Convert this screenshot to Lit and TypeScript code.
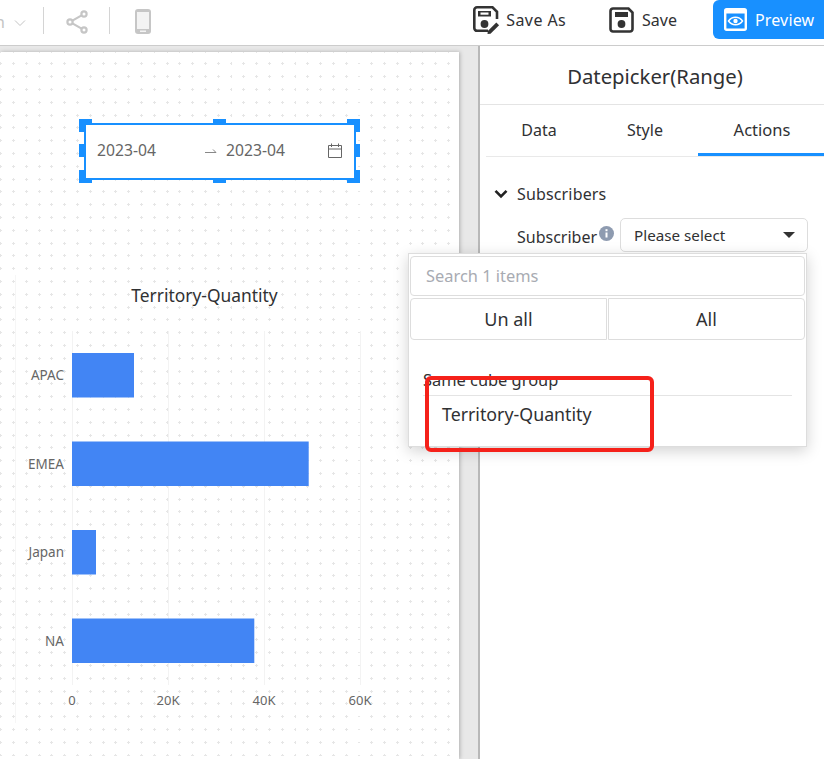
import { LitElement, css, html, svg, unsafeCSS } from 'lit';
import { customElement } from 'lit/decorators.js';

const BARS = [
  { name: 'APAC', end: 134, y: 83 },
  { name: 'EMEA', end: 308.7, y: 171.5 },
  { name: 'Japan', end: 96, y: 260 },
  { name: 'NA', end: 254.3, y: 348.5 },
];
const TICKS = [
  { label: '0', x: 72 },
  { label: '20K', x: 168 },
  { label: '40K', x: 264 },
  { label: '60K', x: 360 },
];

// little plus marks of the design grid
const dots = unsafeCSS(
  "url(\"data:image/svg+xml,%3Csvg xmlns='http://www.w3.org/2000/svg' width='12.8' height='12.8'%3E%3Cpath d='M0 1.5h3M1.5 0v3' stroke='%23e6e6e6' stroke-width='1'/%3E%3C/svg%3E\")"
);

@customElement('app-root')
export class AppRoot extends LitElement {
  static styles = css`
    :host {
      display: block;
      width: 824px;
      height: 759px;
      overflow: hidden;
      position: relative;
      background: #fff;
      font-family: 'Noto Sans', 'Open Sans', sans-serif;
      font-size: 16px;
      color: #303133;
    }
    svg {
      display: block;
      flex: none;
    }

    /* toolbar */
    .toolbar {
      height: 45px;
      border-bottom: 1px solid #ccc;
      display: flex;
      align-items: flex-start;
      background: #fff;
    }
    .cut {
      width: 13px;
      overflow: hidden;
      color: #c4c4c4;
      font-size: 16px;
      line-height: 44px;
      text-indent: -5px;
    }
    .chev {
      margin: 19px 0 0 0;
    }
    .sep {
      width: 1px;
      height: 27px;
      margin-top: 7px;
      background: #d4d4d4;
    }
    .sep.first {
      margin-left: 16px;
    }
    .share {
      margin: 10px 21px 0 22px;
    }
    .phone {
      margin: 9px 0 0 25px;
    }
    .actions {
      margin-left: auto;
      display: flex;
      align-items: flex-start;
    }
    .action {
      display: flex;
      align-items: center;
      gap: 6px;
      height: 40px;
      color: #303133;
      font-size: 16px;
    }
    .action.save-as {
      margin-right: 43px;
      letter-spacing: 0.4px;
    }
    .action.save {
      margin-right: 36px;
      gap: 8px;
    }
    .preview {
      width: 111px;
      height: 39px;
      background: #1890ff;
      color: #fff;
      border-radius: 6px 0 0 6px;
      display: flex;
      align-items: center;
      padding-left: 11px;
      gap: 8px;
      box-sizing: border-box;
      letter-spacing: 0.15px;
    }

    /* body */
    .main {
      display: flex;
      height: 713px;
    }
    .stage {
      width: 478px;
      flex: none;
      background: #e8e8e8;
      padding-top: 6px;
      border-right: 2px solid #b8b8b8;
    }
    .canvas {
      position: relative;
      width: 459px;
      height: 707px;
      background-color: #fff;
      background-image: ${dots};
      background-position: -0.8px -2.3px;
      box-shadow: 1px 0 4px rgba(0, 0, 0, 0.25);
    }
    .picker {
      position: absolute;
      left: 84px;
      top: 71px;
      width: 272px;
      height: 57px;
      box-sizing: border-box;
      border: 2px solid #1890ff;
      background: #fff;
      display: flex;
      align-items: center;
      color: #666;
      font-size: 15.7px;
      padding: 0 0 4px 11px;
    }
    .picker .date {
      width: 106px;
    }
    .picker .to {
      width: 23px;
      margin-top: 1px;
    }
    .picker .cal {
      position: absolute;
      left: 242px;
      top: 18px;
    }
    .h {
      position: absolute;
      background: #1890ff;
    }
    .h.top,
    .h.bottom {
      width: 13px;
      height: 5px;
      left: 127px;
    }
    .h.top {
      top: -6px;
    }
    .h.bottom {
      bottom: -5px;
    }
    .h.left,
    .h.right {
      width: 5px;
      height: 13px;
      top: 19px;
    }
    .h.left {
      left: -7px;
    }
    .h.right {
      right: -6px;
    }
    .c {
      position: absolute;
      width: 13px;
      height: 13px;
      box-sizing: border-box;
      border: 0 solid #1890ff;
    }
    .c.tl {
      left: -7px;
      top: -6px;
      border-width: 5px 0 0 5px;
    }
    .c.tr {
      right: -6px;
      top: -6px;
      border-width: 5px 5px 0 0;
    }
    .c.bl {
      left: -7px;
      bottom: -5px;
      border-width: 0 0 5px 5px;
    }
    .c.br {
      right: -6px;
      bottom: -5px;
      border-width: 0 5px 5px 0;
    }
    .chart {
      position: absolute;
      left: 0;
      top: 218px;
    }
    .chart text {
      font-family: 'Noto Sans', 'Open Sans', sans-serif;
    }

    /* side panel */
    .panel {
      flex: 1;
      min-width: 0;
      background: #fff;
    }
    .panel-title {
      height: 58px;
      line-height: 60px;
      text-align: center;
      font-size: 20.3px;
      padding-left: 6px;
      border-bottom: 1px solid #e4e4e4;
    }
    .tabs {
      margin-left: 6px;
      height: 51px;
      display: grid;
      grid-template-columns: 106px 106px 126px;
      border-bottom: 1px solid #e9e9e9;
    }
    .tab {
      text-align: center;
      line-height: 50px;
      font-size: 16px;
      height: 51px;
      box-sizing: border-box;
    }
    .tab.active {
      border-bottom: 3px solid #1890ff;
      font-size: 16.5px;
      padding-left: 2px;
    }
    .section {
      display: flex;
      align-items: center;
      margin: 26px 0 0 14px;
      gap: 9px;
      height: 22px;
      letter-spacing: 0.15px;
    }
    .field {
      display: flex;
      align-items: center;
      margin: 13px 0 0 37px;
    }
    .field .label {
      padding-top: 3px;
    }
    .info {
      margin: -3px 6px 0 2px;
    }
    .select {
      width: 188px;
      height: 34px;
      box-sizing: border-box;
      border: 1px solid #ddd;
      border-radius: 5px;
      display: flex;
      align-items: center;
      justify-content: space-between;
      padding: 0 12px 0 13px;
      font-size: 15.2px;
    }

    /* dropdown over the panel */
    .drop {
      position: absolute;
      left: 408px;
      top: 253px;
      width: 399px;
      height: 194px;
      box-sizing: border-box;
      background: #fff;
      border: 1px solid #ddd;
      box-shadow: 0 4px 14px rgba(0, 0, 0, 0.18);
      padding: 2px 1px 0;
    }
    .search {
      height: 40px;
      box-sizing: border-box;
      border: 1px solid #ddd;
      border-radius: 4px;
      color: #a8abb2;
      line-height: 38px;
      padding-left: 15px;
      font-size: 16.4px;
    }
    .btns {
      display: grid;
      grid-template-columns: 1fr 1fr;
      gap: 1px;
      margin-top: 2px;
    }
    .btn {
      height: 42px;
      box-sizing: border-box;
      border: 1px solid #ddd;
      text-align: center;
      line-height: 40px;
      font-size: 18px;
    }
    .btn:first-child {
      border-radius: 4px 0 0 4px;
    }
    .btn:last-child {
      border-radius: 0 4px 4px 0;
    }
    .group {
      margin: 28px 13px 0 13px;
      height: 27px;
      line-height: 24px;
      font-size: 16.4px;
      border-bottom: 1px solid #e4e4e4;
    }
    .item {
      margin: 5px 0 0 32px;
      font-size: 17.8px;
      line-height: 26px;
    }
    .mark {
      position: absolute;
      left: 425px;
      top: 376px;
      width: 229px;
      height: 76px;
      box-sizing: border-box;
      border: 4px solid #f5211a;
      border-radius: 6px;
      pointer-events: none;
    }
  `;

  private renderChart() {
    return svg`
      <line x1="15.5" y1="5" x2="15.5" y2="453" stroke="#f6f6f6"/>
      ${TICKS.map(
        (t) => svg`<line x1=${t.x + 0.5} y1="61" x2=${t.x + 0.5} y2="415" stroke="#f3f3f3"/>
          <text x=${t.x} y="435" text-anchor="middle" font-size="13" fill="#666">${t.label}</text>`
      )}
      <text x="204.5" y="32" text-anchor="middle" font-size="17.400" fill="#303133">Territory-Quantity</text>
      ${BARS.map(
        (b) => svg`<rect x="72" y=${b.y} width=${b.end - 72} height="44.5" fill="#4285f4"/>
          <text x="64" y=${b.y + 27} text-anchor="end" font-size="13.500" fill="#666">${b.name}</text>`
      )}
    `;
  }

  render() {
    return html`
      <div class="toolbar">
        <div class="cut">n</div>
        <svg class="chev" width="14" height="8" viewBox="0 0 14 8"><path d="M2 1.5l5 5 5-5" fill="none" stroke="#c4c4c4" stroke-width="1"/></svg>
        <div class="sep first"></div>
        <svg class="share" width="22" height="24" viewBox="0 0 22 24">
          <g fill="none" stroke="#c6c6c6" stroke-width="2.2">
            <circle cx="4" cy="12" r="2.6"/><circle cx="18" cy="4" r="2.6"/><circle cx="18" cy="20" r="2.6"/>
            <path d="M6.4 10.6L15.6 5.4M6.4 13.4l9.2 5.2"/>
          </g>
        </svg>
        <div class="sep"></div>
        <svg class="phone" width="16" height="25" viewBox="0 0 16 25">
          <rect width="16" height="25" rx="3" fill="#c6c6c6"/>
          <rect x="2" y="3" width="12" height="17" fill="#f3f3f3"/>
          <rect x="5" y="21.5" width="6" height="1.5" fill="#f3f3f3"/>
        </svg>
        <div class="actions">
          <div class="action save-as">
            <svg width="27" height="28" viewBox="0 0 27 28">
              <path d="M15 24.800H4a2.700 2.700 0 0 1-2.700-2.700V4A2.700 2.700 0 0 1 4 1.300h15.500l4.500 4.500V13" fill="none" stroke="#333" stroke-width="2.600"/>
              <path d="M5 5h13v5.500H5z" fill="#333"/>
              <rect x="7.500" y="6.500" width="8" height="2.200" fill="#fff"/>
              <circle cx="11.500" cy="18" r="3.900" fill="#333"/>
              <path d="M17.500 27.800l-3 .2.300-3 8.500-8.500 2.800 2.800z" fill="#333"/>
            </svg>
            Save As
          </div>
          <div class="action save">
            <svg width="25" height="26" viewBox="0 0 25 26">
              <path d="M4 1.500h15.500l4 4V22a2.500 2.500 0 0 1-2.500 2.500H4A2.500 2.500 0 0 1 1.500 22V4A2.500 2.500 0 0 1 4 1.500z" fill="none" stroke="#333" stroke-width="2.600"/>
              <path d="M6 5h13v5H6z" fill="#333"/>
              <circle cx="12.500" cy="17" r="3.900" fill="#333"/>
            </svg>
            Save
          </div>
          <div class="preview">
            <svg width="23" height="23" viewBox="0 0 23 23">
              <rect x="1.200" y="1.200" width="20.600" height="20.600" rx="1.500" fill="none" stroke="#fff" stroke-width="2.400"/>
              <rect x="1" y="1" width="21" height="4.500" fill="#fff"/>
              <path d="M4.500 13c3.500-5 10.500-5 14 0-3.500 5-10.500 5-14 0z" fill="none" stroke="#fff" stroke-width="1.500"/>
              <circle cx="11.500" cy="13" r="2.200" fill="#fff"/>
            </svg>
            Preview
          </div>
        </div>
      </div>

      <div class="main">
        <div class="stage">
          <div class="canvas">
            <div class="picker">
              <span class="date">2023-04</span>
              <svg class="to" width="23" height="8" viewBox="0 0 23 8"><path d="M2 6.500h11L10 3.500" fill="none" stroke="#888" stroke-width="1"/></svg>
              <span class="date">2023-04</span>
              <svg class="cal" width="14" height="15" viewBox="0 0 14 15">
                <path d="M.5 2.500h13v12H.5zM.5 6h13M3.500 .5v3.500M10.500 .5v3.500" fill="none" stroke="#666" stroke-width="1"/>
              </svg>
              <i class="c tl"></i><i class="c tr"></i><i class="c bl"></i><i class="c br"></i>
              <i class="h top"></i><i class="h bottom"></i><i class="h left"></i><i class="h right"></i>
            </div>
            <svg class="chart" width="459" height="489" viewBox="0 0 459 489">${this.renderChart()}</svg>
          </div>
        </div>
        <div class="panel">
          <div class="panel-title">Datepicker(Range)</div>
          <div class="tabs">
            <div class="tab">Data</div>
            <div class="tab">Style</div>
            <div class="tab active">Actions</div>
          </div>
          <div class="section">
            <svg width="14" height="10" viewBox="0 0 14 10"><path d="M1.500 1.800L7 7.500l5.500-5.700" fill="none" stroke="#222" stroke-width="2.600"/></svg>
            Subscribers
          </div>
          <div class="field">
            <span class="label">Subscriber</span>
            <svg class="info" width="15" height="15" viewBox="0 0 15 15">
              <circle cx="7.500" cy="7.500" r="7.500" fill="#8e9bb0"/>
              <rect x="6.500" y="6.500" width="2" height="5" fill="#fff"/>
              <rect x="6.500" y="3.200" width="2" height="2" fill="#fff"/>
            </svg>
            <div class="select">
              Please select
              <svg width="12" height="6" viewBox="0 0 12 6"><path d="M0 0h12L6 6z" fill="#333"/></svg>
            </div>
          </div>
        </div>
      </div>

      <div class="drop">
        <div class="search">Search 1 items</div>
        <div class="btns">
          <div class="btn">Un all</div>
          <div class="btn">All</div>
        </div>
        <div class="group">Same cube group</div>
        <div class="item">Territory-Quantity</div>
      </div>
      <div class="mark"></div>
    `;
  }
}
